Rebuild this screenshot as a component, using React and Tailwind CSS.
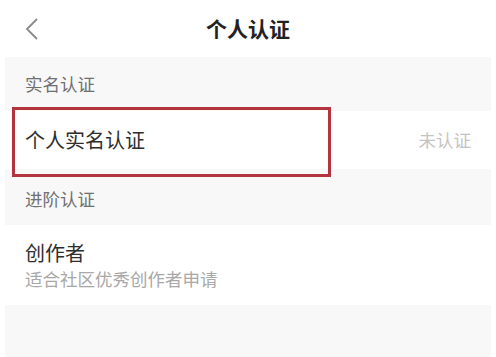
import React from "react";

const FONT = { fontFamily: '"Noto Sans CJK SC", "Noto Sans", sans-serif' };

// ===================== HEADER =====================
const Header = () => (
  <div className="grid h-[57px] grid-cols-[1fr_auto_1fr] items-center px-[24px]">
    <svg width="15" height="24" viewBox="0 0 15 24" className="mt-[1px]">
      <polyline points="13,2 3,12 13,22" fill="none" stroke="#8a8a8a" strokeWidth="1.8" />
    </svg>
    <div className="text-[21px] font-bold text-[#222] leading-none">个人认证</div>
    <div />
  </div>
);

const SectionTitle = ({ children, className = "" }) => (
  <div className={`flex items-center bg-[#f8f8f8] pl-[20px] text-[17.5px] text-[#707070] ${className}`}>
    {children}
  </div>
);

// ===================== PAGE =====================
export default function App() {
  return (
    <div className="h-[357px] w-[496px] overflow-hidden bg-white" style={FONT}>
      <Header />
      <div className="mx-[5px] flex flex-col">
        <SectionTitle className="h-[54px]">实名认证</SectionTitle>

        <div className="relative flex h-[58px] items-center justify-between bg-white pl-[20px] pr-[20px]">
          <span className="text-[20px] text-[#2e2e2e]">个人实名认证</span>
          <span className="text-[17.5px] text-[#c4c4c4]">未认证</span>
          {/* highlight box */}
          <div className="absolute left-[7px] top-[-4px] h-[70px] w-[319px] border-[3px] border-[#b3343f]" />
        </div>

        <SectionTitle className="h-[56px] pt-[4px]">进阶认证</SectionTitle>

        <div className="flex h-[80px] flex-col justify-center bg-white pl-[20px]">
          <span className="text-[20px] leading-[28px] text-[#2e2e2e]">创作者</span>
          <span className="text-[17.5px] leading-[24px] text-[#a8a8a8]">适合社区优秀创作者申请</span>
        </div>

        <div className="h-[60px] bg-[#f8f8f8]" />
      </div>
    </div>
  );
}
